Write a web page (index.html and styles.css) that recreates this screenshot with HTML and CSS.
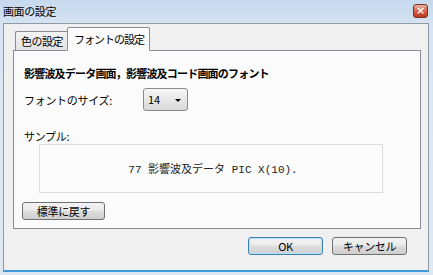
FILE: index.html
```html
<!DOCTYPE html>
<html lang="ja">

<head>
    <meta charset="UTF-8">
    <meta name="viewport" content="width=device-width, initial-scale=1.0">
    <title>画面の設定</title>
    <link rel="stylesheet" href="styles.css">
</head>

<body>

    <div class="window">
        <div class="titlebar">
            <span class="title">画面の設定</span>
            <span class="close-btn">×</span>
        </div>

        <div class="client">
            <div class="tabs">
                <div class="tab">色の設定</div>
                <div class="tab active">フォントの設定</div>
            </div>

            <div class="panel">
                <p class="heading">影響波及データ画面，影響波及コード画面のフォント</p>

                <div class="size-row">
                    <span class="label">フォントのサイズ:</span>
                    <div class="select">
                        <span>14</span>
                        <span class="arrow"></span>
                    </div>
                </div>

                <p class="label sample-label">サンプル:</p>
                <div class="sample-box">77 影響波及データ PIC X(10).</div>

                <button class="btn reset-btn">標準に戻す</button>
            </div>

            <div class="footer">
                <button class="btn default">OK</button>
                <button class="btn">キャンセル</button>
            </div>
        </div>
    </div>

</body>

</html>
```

FILE: styles.css
```css
/* RESET BÁSICO */
* {
    margin: 0;
    padding: 0;
    box-sizing: border-box;
}

body {
    font-family: 'Noto Sans CJK JP', sans-serif;
    font-size: 11px;
    color: #000;
    background: #fff;
}

/* JANELA */
.window {
    width: 433px;
    height: 275px;
    display: flex;
    flex-direction: column;
    padding: 0 4px 3px 3px;
    background: linear-gradient(#c6d9ee, #d9e5f3 30px, #dfe8f2);
}

.titlebar {
    height: 23px;
    display: flex;
    align-items: center;
    justify-content: space-between;
    padding-right: 1px;
}

.title {
    line-height: 14px;
    margin-top: -1px;
    letter-spacing: -0.4px;
}

.close-btn {
    width: 15px;
    height: 14px;
    margin-top: -1px;
    border: 1px solid #7d3424;
    border-radius: 3px;
    background: linear-gradient(#eab0a0, #d4644a 50%, #bb3a1e);
    color: #fff;
    font-family: 'DejaVu Sans', sans-serif;
    font-size: 11px;
    font-weight: bold;
    line-height: 12px;
    text-align: center;
}

/* ÁREA CLIENTE */
.client {
    flex: 1;
    display: flex;
    flex-direction: column;
    background: #f0f0f0;
    border: 1px solid #8e9aa6;
    border-bottom: 2px solid #3e9ad6;
    padding: 3px 7px 0 9px;
}

.tabs {
    display: flex;
    align-items: flex-end;
    padding-left: 2px;
    position: relative;
    z-index: 1;
    margin-bottom: -1px;
}

.tab {
    height: 20px;
    padding: 0 4px 0 5px;
    line-height: 19px;
    letter-spacing: -0.5px;
    border: 1px solid #898c95;
    border-right: none;
    border-bottom: 1px solid #898c95;
    border-radius: 2px 0 0 0;
    background: linear-gradient(#f3f3f3, #e3e3e3);
}

.tab.active {
    height: 24px;
    padding: 0 5px 0 6px;
    line-height: 22px;
    letter-spacing: -1px;
    border-right: 1px solid #898c95;
    border-bottom: 1px solid #fbfbfb;
    border-radius: 2px 2px 0 0;
    background: #fbfbfb;
}

/* PAINEL DA ABA */
.panel {
    border: 1px solid #898c95;
    background: #fbfbfb;
    padding: 15px 0 8px 9px;
}

.heading {
    font-weight: bold;
    line-height: 14px;
    margin-left: 1px;
    letter-spacing: -0.8px;
}

.size-row {
    display: flex;
    align-items: center;
    margin-top: 8px;
    margin-left: 1px;
}

.label {
    line-height: 14px;
    width: 119px;
    letter-spacing: -0.3px;
}

.select {
    width: 45px;
    height: 23px;
    display: flex;
    align-items: center;
    justify-content: space-between;
    padding: 0 6px 2px 4px;
    border: 1px solid #8a8a8a;
    border-radius: 3px;
    background: linear-gradient(#f6f6f6, #e8e8e8 50%, #d8d8d8);
}

.arrow {
    width: 0;
    height: 0;
    margin-top: 3px;
    border-left: 3px solid transparent;
    border-right: 3px solid transparent;
    border-top: 3px solid #000;
}

.sample-label {
    margin-top: 18px;
    margin-left: 1px;
}

.sample-box {
    width: 344px;
    height: 49px;
    margin: 1px 0 0 16px;
    border: 1px solid #dcdcdc;
    background: #fcfcfc;
    display: flex;
    align-items: center;
    justify-content: center;
    font-family: 'Liberation Mono', 'Noto Sans CJK JP', monospace;
    font-size: 11px;
    padding: 0 0 2px 4px;
    color: #222;
}

/* BOTÕES */
.btn {
    height: 18px;
    border: 1px solid #707070;
    border-radius: 3px;
    background: linear-gradient(#f2f2f2, #ebebeb 45%, #dddddd 50%, #cfcfcf);
    font-family: 'Noto Sans CJK JP', sans-serif;
    font-size: 11px;
    line-height: 15px;
    color: #000;
    width: 75px;
    letter-spacing: -0.3px;
}

.btn.default {
    border-color: #3c7fb1;
    box-shadow: inset 0 0 0 1px #b9e3f8;
}

.reset-btn {
    display: block;
    width: 83px;
    margin-top: 9px;
    margin-left: -1px;
}

.footer {
    display: flex;
    justify-content: flex-end;
    gap: 9px;
    margin-top: 8px;
    padding-right: 14px;
}
```
